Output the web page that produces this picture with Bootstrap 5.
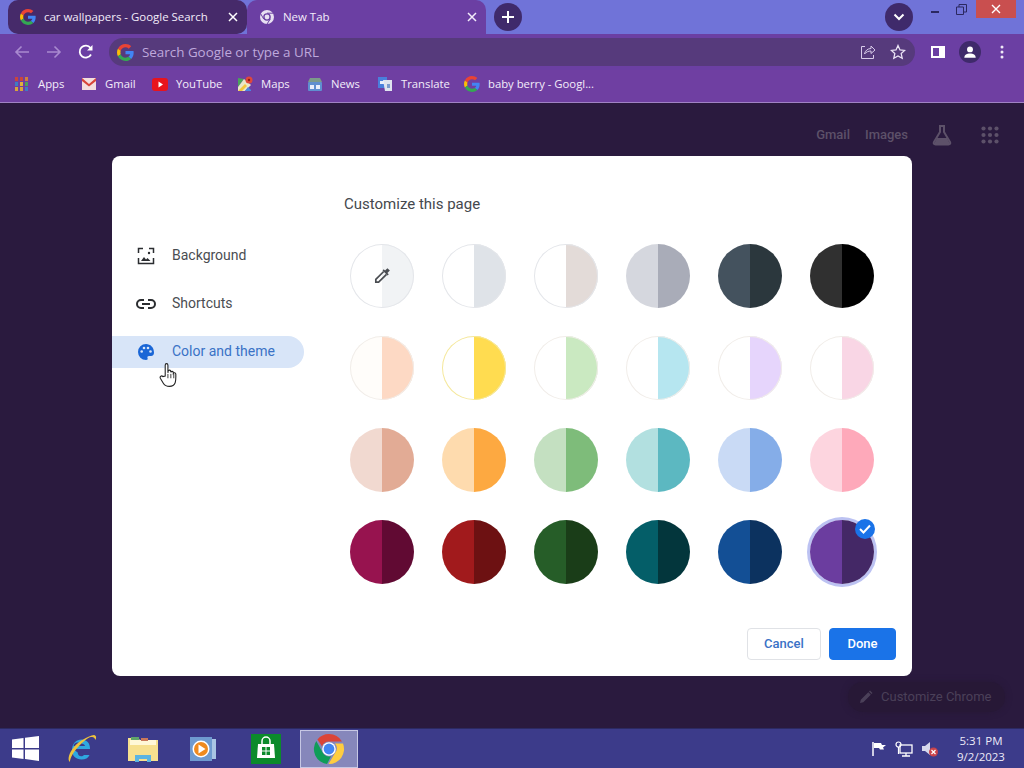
<!DOCTYPE html>
<html lang="en">
<head>
<meta charset="utf-8">
<title>Customize this page</title>
<link href="https://cdn.jsdelivr.net/npm/bootstrap@5.3.0/dist/css/bootstrap.min.css" rel="stylesheet">
<style>
html,body{height:100%;overflow:hidden}
body{width:1024px;height:768px;display:flex;flex-direction:column;background:#2a1a3e;font-family:"Open Sans","Noto Sans",sans-serif}
.chrome-strip{height:34px;background:#7073d8;padding-left:8px;flex:none}
.tab-item{width:239px;height:34px;font-size:11.45px;color:#f3edfa;padding:0 9px 0 12px;gap:8px}
.tab-on{background:#462a6a;border-radius:10px}
.tab-off{background:#6b3fa3;border-radius:10px 10px 0 0}
.tab-text{flex:1;white-space:nowrap;overflow:hidden}
.round-btn{width:28px;height:28px;border-radius:50%;background:#3f2a6b}
.plus-gap{margin-left:8px}
.chev-gap{margin-right:7px}
.win-min{width:30px;height:18px}
.win-max{width:22px;height:18px;margin-right:4px}
.win-close{width:40px;height:18px;background:#c94f4f;margin-right:8px}
.chrome-bar{height:36px;background:#6b3fa3;padding:4px 0 4px 6px;flex:none}
.nav-ico{width:32px;height:28px}
.omni{height:28px;width:806px;margin-left:7px;background:#563a7c;border-radius:14px;padding:0 9px 0 8px;gap:8px;font-size:13.4px;color:#bfa9dc}
.omni-space{flex:1}
.share-gap{margin-right:6px}
.panel-ico{margin-left:16px}
.avatar{width:22px;height:22px;border-radius:50%;background:#3f2a6b;margin-left:14px}
.more-ico{margin-left:19px}
.marks{height:33px;background:#6f3fa2;border-bottom:1px solid #a083c4;padding:0 0 4px 14px;font-size:11.3px;color:#f3edfa;flex:none;display:grid;grid-template-columns:67px 71px 85px 70px 70px 87px 1fr;align-items:center}
.mark-item{gap:8px;white-space:nowrap}
.stage{flex:1;min-height:0;position:relative}
.top-links{position:absolute;top:21px;right:25px;gap:15px;color:#5d5169;font-family:Roboto,sans-serif;font-size:13px;font-weight:500}
.flask-gap{margin-left:8px;margin-right:13px}
.dialog-box{width:800px;height:520px;background:#fff;border-radius:8px;position:relative;z-index:2}
.side-col{width:192px;padding-top:84px;flex:none;font-family:Roboto,sans-serif;font-size:14px;color:#4a4d52}
.side-item{height:32px;margin-bottom:16px;padding-left:25px;gap:17px}
.link-ico{margin:0 -1px}
.side-on{background:#d8e5f8;border-radius:0 16px 16px 0;color:#3a72c6}
.main-col{flex:1;padding:38px 16px 16px 40px;font-family:Roboto,sans-serif}
.dlg-title{font-size:15px;color:#45484d;line-height:20px;height:20px}
.swatches{display:grid;grid-template-columns:repeat(6,64px);gap:28px;margin:30px 0 0 6px}
.dot{width:64px;height:64px;border-radius:50%;border:0;padding:0;background:linear-gradient(90deg,var(--a) 50%,var(--b) 50%);position:relative}
.dot-line{box-shadow:inset 0 0 0 1px #e4e6ea}
.dot-soft{box-shadow:inset 0 0 0 1px #f1ede9}
.dot-gold{box-shadow:inset 0 0 0 1px #f5e89c}
.dot-ring{box-shadow:0 0 0 3px #bcc2f2}
.tick-badge{position:absolute;top:-1px;right:-1px;width:20px;height:20px;border-radius:50%;background:#1a73e8;display:flex;align-items:center;justify-content:center}
.c1{--a:#fff;--b:#f1f3f5}.c2{--a:#fff;--b:#dfe3e8}.c3{--a:#fff;--b:#e3dbd8}.c4{--a:#d5d7de;--b:#a9acb8}.c5{--a:#44525e;--b:#2b373d}.c6{--a:#303030;--b:#000}
.c7{--a:#fffdfa;--b:#fdd9c4}.c8{--a:#fff;--b:#ffdc50}.c9{--a:#fff;--b:#cae9c1}.c10{--a:#fff;--b:#b6e6f0}.c11{--a:#fff;--b:#e6d5fc}.c12{--a:#fff;--b:#f9d6e5}
.c13{--a:#f1d9d0;--b:#e2ab95}.c14{--a:#fedbae;--b:#fda941}.c15{--a:#c4e0c1;--b:#7ebc7a}.c16{--a:#b2e0e0;--b:#5cb8c1}.c17{--a:#c9daf5;--b:#85ade8}.c18{--a:#fdd5df;--b:#fea9ba}
.c19{--a:#97134f;--b:#610a33}.c20{--a:#a11a1c;--b:#6d1112}.c21{--a:#265d28;--b:#1a3d18}.c22{--a:#045e68;--b:#03363c}.c23{--a:#134f95;--b:#0c325f}.c24{--a:#6b3d9f;--b:#442866}
.dlg-actions{gap:8px;margin-top:44px}
.act-btn{height:32px;font-size:13px;font-weight:500;border-radius:4px;padding:0;line-height:30px}
.act-cancel{width:74px;color:#3a72c6;background:#fff;border:1px solid #e0e2e6}
.act-done{width:67px;color:#fff;background:#1a73e8;border:1px solid #1a73e8}
.hand{position:absolute;left:47px;top:206px;z-index:3}
.cust-pill{position:absolute;right:19px;bottom:16px;height:30px;width:157px;background:#271836;box-shadow:0 0 6px #271836;border-radius:15px;color:#4b4059;font-family:Roboto,sans-serif;font-size:13px;padding-left:11px;gap:8px}
.os-bar{height:40px;background:#3c3b8a;border-top:1px solid #2c2a63;flex:none}
.os-slot{height:38px}
.os-w50{width:50px}
.os-w62{width:62px}
.os-w58{width:58px}
.os-w68{width:68px}
.os-active{background:#8687bb;border:1px solid #c6c7e4}
.os-tray{margin-left:auto;gap:8px;padding-right:15px;color:#eceaf8;font-size:11.5px}
.os-clock{width:56px;text-align:center;line-height:16px;margin-left:6px;white-space:nowrap}
</style>
</head>
<body>
<svg width="0" height="0" class="position-absolute">
<defs>
<symbol id="gg" viewBox="0 0 48 48"><path fill="#EA4335" d="M24 9.500c3.500 0 6.700 1.200 9.200 3.600l6.900-6.900C35.900 2.400 30.500 0 24 0 14.600 0 6.500 5.400 2.600 13.200l8 6.200C12.500 13.700 17.800 9.500 24 9.500z"/><path fill="#4285F4" d="M47 24.500c0-1.600-.1-3.100-.4-4.500H24v9h12.900c-.6 3-2.200 5.500-4.700 7.200l7.700 6c4.500-4.200 7.100-10.300 7.100-17.700z"/><path fill="#FBBC05" d="M10.500 28.600c-.5-1.400-.8-3-.8-4.600s.3-3.200.8-4.600l-8-6.200C.9 16.500 0 20.100 0 24s.9 7.500 2.600 10.800l7.900-6.200z"/><path fill="#34A853" d="M24 48c6.500 0 11.900-2.100 15.900-5.800l-7.700-6c-2.200 1.400-4.900 2.300-8.200 2.300-6.200 0-11.500-4.200-13.400-9.900l-8 6.200C6.500 42.600 14.600 48 24 48z"/></symbol>
<symbol id="chromeball" viewBox="0 0 32 32"><path fill="#db4437" d="M16 1a15 15 0 0 1 13 7.500H16a7.500 7.500 0 0 0-7 4.800L4.400 6.500A15 15 0 0 1 16 1z"/><path fill="#0f9d58" d="M3.300 8 9.800 19.800A7.500 7.500 0 0 0 18 23.300L14 31A15 15 0 0 1 3.300 8z"/><path fill="#ffcd40" d="M30 10.500A15 15 0 0 1 15.500 31L22 20a7.500 7.500 0 0 0 0-9.500z"/><circle cx="16" cy="16" r="6.800" fill="#fff"/><circle cx="16" cy="16" r="5.400" fill="#4285f4"/></symbol>
</defs>
</svg>

<div class="chrome-strip d-flex align-items-center">
  <div class="tab-item tab-on d-flex align-items-center">
    <svg width="16" height="16"><use href="#gg"/></svg>
    <span class="tab-text">car wallpapers - Google Search</span>
    <svg width="10" height="10" viewBox="0 0 10 10"><path d="M1 1l8 8M9 1l-8 8" stroke="#fff" stroke-width="1.500"/></svg>
  </div>
  <div class="tab-item tab-off d-flex align-items-center">
    <svg width="16" height="16" viewBox="0 0 16 16"><circle cx="8" cy="8" r="7" fill="#e8e0f2"/><circle cx="8" cy="8" r="3.800" fill="#6b3fa3"/><circle cx="8" cy="8" r="2.400" fill="#e8e0f2"/><path d="M8 4.200h6M4.700 10 1.800 5M11.300 10 8 15" stroke="#6b3fa3" stroke-width="1"/></svg>
    <span class="tab-text">New Tab</span>
    <svg width="10" height="10" viewBox="0 0 10 10"><path d="M1 1l8 8M9 1l-8 8" stroke="#f3edfa" stroke-width="1.500"/></svg>
  </div>
  <div class="round-btn plus-gap d-flex align-items-center justify-content-center">
    <svg width="14" height="14" viewBox="0 0 14 14"><path d="M7 1v12M1 7h12" stroke="#fff" stroke-width="2"/></svg>
  </div>
  <div class="round-btn ms-auto chev-gap d-flex align-items-center justify-content-center">
    <svg width="12" height="8" viewBox="0 0 12 8"><path d="M1.500 1.500 6 6l4.500-4.500" fill="none" stroke="#fff" stroke-width="2"/></svg>
  </div>
  <div class="win-min d-flex align-items-center justify-content-center align-self-start">
    <svg width="10" height="10" viewBox="0 0 10 10"><path d="M1 8h8" stroke="#2b2860" stroke-width="2"/></svg>
  </div>
  <div class="win-max d-flex align-items-center justify-content-center align-self-start">
    <svg width="11" height="11" viewBox="0 0 11 11"><path d="M.5 3h7v7.500h-7zM3 3V.5h7.500V8H8" fill="none" stroke="#2b2860"/></svg>
  </div>
  <div class="win-close d-flex align-items-center justify-content-center align-self-start">
    <svg width="10" height="10" viewBox="0 0 10 10"><path d="M1 1l8 8M9 1l-8 8" stroke="#fff" stroke-width="1.400"/></svg>
  </div>
</div>

<div class="chrome-bar d-flex align-items-center">
  <div class="nav-ico d-flex align-items-center justify-content-center">
    <svg width="16" height="14" viewBox="0 0 16 14"><path d="M15 7H2M7.500 1.500 2 7l5.500 5.500" fill="none" stroke="#a98ad0" stroke-width="1.600"/></svg>
  </div>
  <div class="nav-ico d-flex align-items-center justify-content-center">
    <svg width="16" height="14" viewBox="0 0 16 14"><path d="M1 7h13M8.500 1.500 14 7l-5.500 5.500" fill="none" stroke="#a98ad0" stroke-width="1.600"/></svg>
  </div>
  <div class="nav-ico d-flex align-items-center justify-content-center">
    <svg width="16" height="16" viewBox="0 0 16 16"><path d="M13 10.500A6 6 0 1 1 12.500 4" fill="none" stroke="#fff" stroke-width="1.800"/><path d="M14.500 1v5.500H9z" fill="#fff"/></svg>
  </div>
  <div class="omni d-flex align-items-center">
    <svg width="17" height="17"><use href="#gg"/></svg>
    <span>Search Google or type a URL</span>
    <span class="omni-space"></span>
    <svg width="16" height="16" class="share-gap" viewBox="0 0 16 16"><path d="M5 2.500H1.500v12h12V11" fill="none" stroke="#d8cbe9"/><path d="M4.500 10c.5-3.500 3.500-5.500 6.500-5.500V2l4 4-4 3.500V7C8.500 7 6 8 4.500 10z" fill="none" stroke="#d8cbe9"/></svg>
    <svg width="16" height="16" viewBox="0 0 16 16"><path d="M8 1.500l2 4.400 4.700.5-3.500 3.200 1 4.700L8 12l-4.200 2.300 1-4.700L1.300 6.400 6 5.900z" fill="none" stroke="#ebe3f5" stroke-width="1.300"/></svg>
  </div>
  <svg class="panel-ico" width="14" height="12" viewBox="0 0 14 12"><path d="M0 0h14v12H0z" fill="#fff"/><path d="M2 2h6v8H2z" fill="#6b3fa3"/></svg>
  <div class="avatar d-flex align-items-center justify-content-center">
    <svg width="14" height="14" viewBox="0 0 16 16"><circle cx="8" cy="5" r="3.400" fill="#fff"/><path d="M1.500 14.500c0-3.500 3-4.800 6.500-4.800s6.500 1.300 6.500 4.800z" fill="#fff"/></svg>
  </div>
  <svg class="more-ico" width="4" height="14" viewBox="0 0 4 14"><circle cx="2" cy="2" r="1.500" fill="#f0eaf7"/><circle cx="2" cy="7" r="1.500" fill="#f0eaf7"/><circle cx="2" cy="12" r="1.500" fill="#f0eaf7"/></svg>
</div>

<div class="marks">
  <div class="mark-item d-flex align-items-center">
    <svg width="16" height="16" viewBox="0 0 16 16"><g fill="#c9463c"><rect x="1" y="1" width="3" height="4"/><rect x="6" y="1" width="3" height="4"/></g><rect x="11" y="1" width="3" height="4" fill="#d27f3a"/><rect x="1" y="6" width="3" height="4" fill="#3e7bc4"/><rect x="6" y="6" width="3" height="4" fill="#e0b13a"/><rect x="11" y="6" width="3" height="4" fill="#4da05a"/><g fill="#d9a33a"><rect x="1" y="11" width="3" height="4"/><rect x="6" y="11" width="3" height="4"/></g><rect x="11" y="11" width="3" height="4" fill="#3e7bc4"/></svg>
    <span>Apps</span>
  </div>
  <div class="mark-item d-flex align-items-center">
    <svg width="16" height="14" viewBox="0 0 16 14"><path d="M1 1h14v12H1z" fill="#f4dede"/><path d="M1 1l7 6 7-6v3L8 9.500 1 4z" fill="#d8453a"/></svg>
    <span>Gmail</span>
  </div>
  <div class="mark-item d-flex align-items-center">
    <svg width="16" height="13" viewBox="0 0 16 13"><rect width="16" height="13" rx="3" fill="#e8141c"/><path d="M6.500 3.500v6l4.500-3z" fill="#fff"/></svg>
    <span>YouTube</span>
  </div>
  <div class="mark-item d-flex align-items-center">
    <svg width="16" height="16" viewBox="0 0 16 16"><path d="M1 2l6 1L1 11z" fill="#4aa35c"/><path d="M1 11l6-8 7 6-6 6H1z" fill="#e9e6c8"/><path d="M1 15l7-7 2 2-5 5z" fill="#f2c63c"/><path d="M8 15l3-4 3 3v1z" fill="#4a86e0"/><circle cx="12" cy="4" r="3.500" fill="#e0473b"/><circle cx="12" cy="4" r="1.200" fill="#8d1e15"/></svg>
    <span>Maps</span>
  </div>
  <div class="mark-item d-flex align-items-center">
    <svg width="16" height="15" viewBox="0 0 16 15"><path d="M3 1h10l2 4H1z" fill="#7c9a8a"/><rect x="1" y="5" width="14" height="9" rx="1" fill="#5f8fd0"/><rect x="3" y="8" width="4" height="4" fill="#e8eefb"/><rect x="9" y="8" width="4" height="4" fill="#e8eefb"/></svg>
    <span>News</span>
  </div>
  <div class="mark-item d-flex align-items-center">
    <svg width="16" height="16" viewBox="0 0 16 16"><path d="M1 1h9v11H1z" fill="#4a7fdc"/><path d="M6 4h9v11H8z" fill="#dfe4ef"/><path d="M3 5h4v3H3z" fill="#e8eefb"/><path d="M10 8h3v4h-3z" fill="#7c9ccd"/></svg>
    <span>Translate</span>
  </div>
  <div class="mark-item d-flex align-items-center">
    <svg width="16" height="16"><use href="#gg"/></svg>
    <span>baby berry - Googl...</span>
  </div>
</div>

<div class="stage d-flex align-items-center justify-content-center">
  <div class="top-links d-flex align-items-center">
    <span>Gmail</span><span>Images</span>
    <svg class="flask-gap" width="22" height="22" viewBox="0 0 22 22"><path d="M8 2h6M9 2v6L3 18c-.8 1.500 0 2.500 1.500 2.500h13c1.500 0 2.300-1 1.500-2.500L13 8V2" fill="none" stroke="#5d5169" stroke-width="2"/><path d="M6 14h10l3 6H3z" fill="#5d5169"/></svg>
    <svg width="18" height="18" viewBox="0 0 18 18" fill="#5d5169"><circle cx="2.500" cy="2.500" r="2.100"/><circle cx="9" cy="2.500" r="2.100"/><circle cx="15.500" cy="2.500" r="2.100"/><circle cx="2.500" cy="9" r="2.100"/><circle cx="9" cy="9" r="2.100"/><circle cx="15.500" cy="9" r="2.100"/><circle cx="2.500" cy="15.500" r="2.100"/><circle cx="9" cy="15.500" r="2.100"/><circle cx="15.500" cy="15.500" r="2.100"/></svg>
  </div>

  <div class="dialog-box d-flex">
    <div class="side-col">
      <div class="side-item d-flex align-items-center">
        <svg width="18" height="18" viewBox="0 0 18 18"><path d="M6 1.500H1.500V6M12 1.500h4.500V6M1.500 11v5.500h15V11" fill="none" stroke="#2b2d30" stroke-width="1.500"/><circle cx="12" cy="6" r="1.200" fill="#2b2d30"/><path d="M4 14l3-4 2 2.500 1.500-1.500 3 3z" fill="#2b2d30"/></svg>
        <span>Background</span>
      </div>
      <div class="side-item d-flex align-items-center">
        <svg width="20" height="10" viewBox="0 0 20 10" class="link-ico"><path d="M8 1H5a4 4 0 0 0 0 8h3M12 1h3a4 4 0 0 1 0 8h-3M6 5h8" fill="none" stroke="#2b2d30" stroke-width="2"/></svg>
        <span>Shortcuts</span>
      </div>
      <div class="side-item side-on d-flex align-items-center">
        <svg width="18" height="18" viewBox="0 0 18 18"><path d="M9 1a8 8 0 0 0 0 16c1.500 0 2-1 1.500-2-.5-1.200.3-2 1.500-2h2c2 0 3-1.500 3-3.500C17 4.500 13.500 1 9 1z" fill="#1a66d6"/><g fill="#d8e5f8"><circle cx="4.700" cy="8.500" r="1.300"/><circle cx="7" cy="5" r="1.300"/><circle cx="11" cy="5" r="1.300"/><circle cx="13.500" cy="8.500" r="1.300"/></g></svg>
        <span>Color and theme</span>
      </div>
    </div>
    <div class="main-col d-flex flex-column">
      <div class="dlg-title">Customize this page</div>
      <div class="swatches">
        <button class="dot dot-line c1 d-flex align-items-center justify-content-center" type="button" aria-label="Custom color">
          <svg width="18" height="18" viewBox="0 0 16 16"><path d="M9.500 4 2.500 11v2.500H5l7-7" fill="none" stroke="#4a4d52" stroke-width="1.500"/><path d="M8.500 3l4.500 4.500 1-1-1.200-1.200L15 3.200 12.800 1l-2.100 2.200L9.500 2z" fill="#4a4d52"/></svg>
        </button>
        <button class="dot dot-line c2" type="button" aria-label="Color"></button>
        <button class="dot dot-line c3" type="button" aria-label="Color"></button>
        <button class="dot c4" type="button" aria-label="Color"></button>
        <button class="dot c5" type="button" aria-label="Color"></button>
        <button class="dot c6" type="button" aria-label="Color"></button>
        <button class="dot dot-soft c7" type="button" aria-label="Color"></button>
        <button class="dot dot-gold c8" type="button" aria-label="Color"></button>
        <button class="dot dot-soft c9" type="button" aria-label="Color"></button>
        <button class="dot dot-soft c10" type="button" aria-label="Color"></button>
        <button class="dot dot-soft c11" type="button" aria-label="Color"></button>
        <button class="dot dot-soft c12" type="button" aria-label="Color"></button>
        <button class="dot c13" type="button" aria-label="Color"></button>
        <button class="dot c14" type="button" aria-label="Color"></button>
        <button class="dot c15" type="button" aria-label="Color"></button>
        <button class="dot c16" type="button" aria-label="Color"></button>
        <button class="dot c17" type="button" aria-label="Color"></button>
        <button class="dot c18" type="button" aria-label="Color"></button>
        <button class="dot c19" type="button" aria-label="Color"></button>
        <button class="dot c20" type="button" aria-label="Color"></button>
        <button class="dot c21" type="button" aria-label="Color"></button>
        <button class="dot c22" type="button" aria-label="Color"></button>
        <button class="dot c23" type="button" aria-label="Color"></button>
        <button class="dot dot-ring c24" type="button" aria-label="Selected color">
          <span class="tick-badge"><svg width="12" height="10" viewBox="0 0 12 10"><path d="M1 5l3.500 3.500L11 1.500" fill="none" stroke="#fff" stroke-width="2"/></svg></span>
        </button>
      </div>
      <div class="dlg-actions d-flex justify-content-end">
        <button type="button" class="btn act-btn act-cancel">Cancel</button>
        <button type="button" class="btn act-btn act-done">Done</button>
      </div>
    </div>
    <svg class="hand" width="20" height="26" viewBox="0 0 18 24"><path d="M5.500 13V3c0-2 2.500-2 2.500 0v7l.2-1.500c.4-1.500 2.300-1.300 2.400.2l.1.800c.4-1.300 2.200-1.100 2.300.3v.7c.6-1 2.200-.7 2.300.7 0 3 .2 6-.6 8-.8 2-2.500 3.300-5.200 3.300-3 0-4.700-1.200-5.900-3.200L1 15c-.8-1.600 1.200-2.900 2.400-1.500z" fill="#fff" stroke="#222" stroke-width="1"/><path d="M8 11v4M10.700 11v4M13.400 11v4" stroke="#222" stroke-width=".8"/></svg>
  </div>

  <div class="cust-pill d-flex align-items-center">
    <svg width="14" height="14" viewBox="0 0 14 14"><path d="M1 13l.8-3.300 7.500-7.500 2.500 2.500-7.500 7.500zM10 1.500l1-1 2.500 2.500-1 1z" fill="#4b4059"/></svg>
    <span>Customize Chrome</span>
  </div>
</div>

<div class="os-bar d-flex align-items-center">
  <div class="os-slot os-w50 d-flex align-items-center justify-content-center">
    <svg width="27" height="25" viewBox="0 0 27 25" fill="#fff"><path d="M0 3.500 11.500 2v10H0zM13 1.800 27 0v12H13zM0 13.500h11.500V23L0 21.500zM13 13.500h14V25l-14-2z"/></svg>
  </div>
  <div class="os-slot os-w62 d-flex align-items-center justify-content-center">
    <svg width="32" height="32" viewBox="0 0 32 32"><path d="M8 16h17c.2-6-3.500-9.500-8.500-9.500S7 10.500 7 17c0 6 4 9.500 9.500 9.500 4 0 6.700-1.500 8-4.500h-5.500c-.8 1-1.700 1.300-2.700 1.300-2.200 0-3.500-1.500-3.600-3.800zm.5-3c.3-2 1.800-3.400 3.700-3.400S20 11 20 13z" fill="#2fa8e0" fill-rule="evenodd"/><path d="M5 29c-3-2-1-9 4-15S23 3 29 2c2.500.3 2.500 3 1.500 5-.5-2-2-3.500-4.500-3C20 5 5 21 5 29z" fill="#eec33c"/></svg>
  </div>
  <div class="os-slot os-w62 d-flex align-items-center justify-content-center">
    <svg width="32" height="28" viewBox="0 0 32 28"><path d="M1 3h10l2 2h18v21H1z" fill="#f6e08f"/><rect x="3" y="5" width="26" height="5" fill="#fff8d8"/><rect x="4" y="2" width="8" height="3" fill="#5fa36a"/><rect x="14" y="3" width="7" height="3" fill="#c9785a"/><path d="M8 27v-7h16v7h-4v-3h-8v3z" fill="#5ab4e2"/></svg>
  </div>
  <div class="os-slot os-w58 d-flex align-items-center justify-content-center">
    <svg width="26" height="26" viewBox="0 0 26 26"><rect x="0" y="1" width="22" height="24" fill="#6f9ad0"/><rect x="22" y="3" width="4" height="20" fill="#a9c5e4"/><circle cx="11" cy="13" r="8.500" fill="#fff"/><circle cx="11" cy="13" r="7" fill="#ef8a1f"/><path d="M8.500 8.500v9l7-4.500z" fill="#fff"/></svg>
  </div>
  <div class="os-slot os-w68 d-flex align-items-center justify-content-center">
    <svg width="30" height="30" viewBox="0 0 30 30"><rect width="30" height="30" fill="#0b8a2b"/><path d="M7 10h16l1 14H6z" fill="#fff"/><path d="M11 10V7a4 4 0 0 1 8 0v3" fill="none" stroke="#fff" stroke-width="1.500"/><path d="M11 13h3.500v3.500H11zM15.500 13H19v3.500h-3.500zM11 17.500h3.500V21H11zM15.500 17.500H19V21h-3.500z" fill="#0b8a2b"/></svg>
  </div>
  <div class="os-slot os-w58 os-active d-flex align-items-center justify-content-center">
    <svg width="32" height="32"><use href="#chromeball"/></svg>
  </div>
  <div class="os-tray d-flex align-items-center">
    <svg width="16" height="16" viewBox="0 0 16 16"><path d="M2 1v14" stroke="#fff" stroke-width="1.500"/><path d="M3 2h7l1 2h4l-3 2.500 1 2H9L8 7H3z" fill="#fff"/></svg>
    <svg width="18" height="16" viewBox="0 0 18 16"><rect x="5" y="4" width="12" height="8" fill="none" stroke="#fff" stroke-width="1.300"/><path d="M11 12v3M7 15h8" stroke="#fff" stroke-width="1.300"/><circle cx="3.500" cy="3.500" r="2.500" fill="none" stroke="#fff" stroke-width="1.200"/><path d="M3.500 6v7" stroke="#fff" stroke-width="1.200"/></svg>
    <svg width="18" height="16" viewBox="0 0 18 16"><path d="M1 5h3l5-4v13L4 10H1z" fill="#d7d8ec"/><circle cx="12.500" cy="11" r="4.500" fill="#c9434a"/><path d="M10.500 9l4 4M14.500 9l-4 4" stroke="#fff" stroke-width="1.200"/></svg>
    <div class="os-clock"><div>5:31 PM</div><div>9/2/2023</div></div>
  </div>
</div>
<script src="https://cdn.jsdelivr.net/npm/bootstrap@5.3.0/dist/js/bootstrap.bundle.min.js"></script>
</body>
</html>
